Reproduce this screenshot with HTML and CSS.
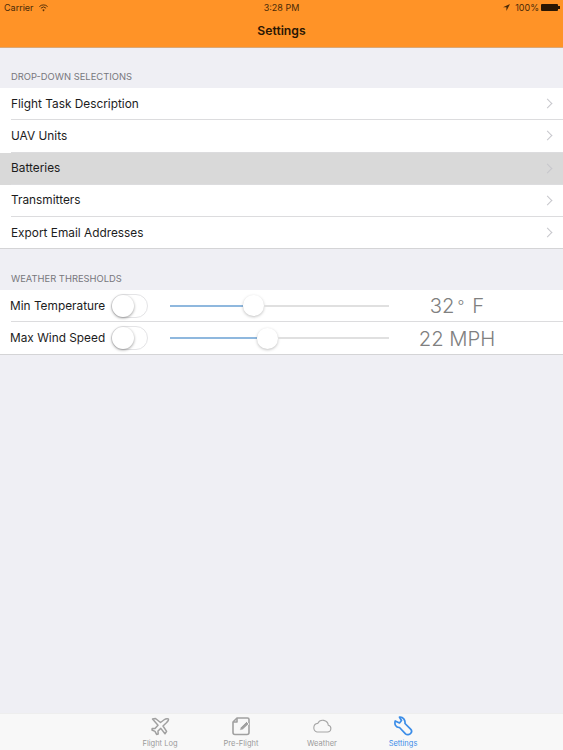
FILE: index.html
```html
<!DOCTYPE html>
<html lang="en">
<head>
  <meta charset="UTF-8">
  <title>Settings</title>
  <link rel="stylesheet" href="styles.css">
</head>
<body>
  <div class="screen">
    <header class="topbar">
      <div class="status">
        <div class="status-left">
          <span>Carrier</span>
          <svg width="9" height="8" viewBox="0 0 9 8" fill="none" stroke="#5a3208" stroke-width="1"><path d="M.4 2.6a5.8 5.8 0 0 1 8.2 0"/><path d="M1.9 4.2a3.7 3.7 0 0 1 5.2 0"/><path d="M4.5 7.4 3.3 5.9a1.7 1.7 0 0 1 2.4 0Z" fill="#5a3208" stroke="none"/></svg>
        </div>
        <div class="status-time">3:28 PM</div>
        <div class="status-right">
          <svg class="arrow" width="7" height="7" viewBox="0 0 7 7"><path d="M7 0 0 3.2h3.4V7Z" fill="#4a2a08"/></svg>
          <span>100%</span>
          <span class="battery"></span>
        </div>
      </div>
      <h1 class="title">Settings</h1>
    </header>

    <main class="content">
      <h2 class="section-label first">DROP-DOWN SELECTIONS</h2>
      <ul class="list">
        <li class="row"><div class="row-body">Flight Task Description<span class="chevron"></span></div></li>
        <li class="row"><div class="row-body">UAV Units<span class="chevron"></span></div></li>
        <li class="row selected"><div class="row-body">Batteries<span class="chevron"></span></div></li>
        <li class="row"><div class="row-body">Transmitters<span class="chevron"></span></div></li>
        <li class="row"><div class="row-body">Export Email Addresses<span class="chevron"></span></div></li>
      </ul>

      <h2 class="section-label">WEATHER THRESHOLDS</h2>
      <div class="list">
        <div class="threshold">
          <span class="threshold-name">Min Temperature</span>
          <span class="switch"></span>
          <div class="slider"><span class="slider-fill fill-temp"></span><span class="slider-thumb"></span><span class="slider-rest"></span></div>
          <div class="reading">32<span class="degree">°</span>F</div>
        </div>
        <div class="threshold">
          <span class="threshold-name">Max Wind Speed</span>
          <span class="switch"></span>
          <div class="slider"><span class="slider-fill fill-wind"></span><span class="slider-thumb"></span><span class="slider-rest"></span></div>
          <div class="reading">22 MPH</div>
        </div>
      </div>
    </main>

    <nav class="tabs">
      <div class="tab">
        <svg width="20" height="20" viewBox="0 0 20 20" fill="none" stroke="#a0a0a0" stroke-width="1.5" stroke-linejoin="round"><path d="M2.5 3 5.500 2.500 10.500 6.500 14.500 3.500C16 2.500 18 2.400 18.400 3 18.800 3.800 17.600 5.600 16.400 6.800L13 10 16.600 15.400 15 17.800 10.800 12.400 8 15 8.200 18 6.600 18.400 5 15.400 2 14 2.200 12.400 5 12.400 8 9.200Z"/></svg>
        <span>Flight Log</span>
      </div>
      <div class="tab">
        <svg width="20" height="20" viewBox="0 0 20 20" fill="none" stroke="#a0a0a0" stroke-width="1.6" stroke-linejoin="round"><path d="M6 2H16.500A1.500 1.500 0 0 1 18 3.500V16.500A2 2 0 0 1 16 18.500H4A2 2 0 0 1 2 16.500V6Z"/><path d="M6 2V6H2"/><path d="M8.500 14.500 9.300 11.500 15.500 5.500 18 8 11.800 13.800Z" fill="#a0a0a0" stroke="#fff" stroke-width=".8"/></svg>
        <span>Pre-Flight</span>
      </div>
      <div class="tab">
        <svg width="20" height="20" viewBox="0 0 20 20" fill="none" stroke="#a6a6a6" stroke-width="1.1"><path d="M5 16H15.500A3.400 3.400 0 0 0 16.300 9.300 5.600 5.600 0 0 0 5.700 7.400 4.400 4.400 0 0 0 5 16Z"/></svg>
        <span>Weather</span>
      </div>
      <div class="tab active">
        <svg width="20" height="20" viewBox="0 0 20 20" fill="none" stroke="#3b8de8" stroke-width="1.700" stroke-linejoin="round"><path d="M6.500 1.200 8.500 4.500 6.500 7 2.200 5C1.200 8.500 3 11.800 6.500 11.500L12.500 17.800C14 19.200 16.500 18.800 17.600 17.500 18.800 16.200 18.800 14.400 17.600 13.200L12 7.500C12.500 4 10 .8 6.500 1.200Z"/></svg>
        <span>Settings</span>
      </div>
    </nav>
  </div>
</body>
</html>
```

FILE: styles.css
```css
* {
  box-sizing: border-box;
  margin: 0;
  padding: 0;
}

body {
  font-family: "Inter", "Liberation Sans", sans-serif;
  background-color: #efeff4;
  color: #1c1c1c;
}

.screen {
  display: flex;
  flex-direction: column;
  height: 750px;
  overflow: hidden;
}

.topbar {
  height: 48px;
  background-color: #ff9327;
  border-bottom: 1px solid #d9a878;
}

.status {
  display: grid;
  grid-template-columns: 1fr auto 1fr;
  align-items: center;
  height: 15px;
  padding: 0 4px;
  font-size: 9px;
  color: #4a2a08;
}

.status-left {
  display: flex;
  align-items: center;
  gap: 5px;
}

.status-right {
  display: flex;
  align-items: center;
  justify-content: flex-end;
  gap: 2px;
}

.arrow {
  margin-right: 3px;
}

.battery {
  position: relative;
  width: 17px;
  height: 7px;
  margin-right: 1px;
  background-color: #2a1704;
  border-radius: 1px;
}

.battery::after {
  content: "";
  position: absolute;
  top: 2px;
  right: -1.5px;
  width: 1.5px;
  height: 3px;
  background-color: #2a1704;
}

.title {
  margin-top: 1px;
  height: 30px;
  line-height: 30px;
  font-size: 12.2px;
  font-weight: 600;
  text-align: center;
  color: #2a1704;
}

.content {
  flex: 1;
}

.section-label {
  height: 40.75px;
  padding: 24px 0 0 11px;
  font-size: 9.4px;
  line-height: 11px;
  font-weight: 400;
  color: #77777c;
}

.section-label.first {
  height: 40px;
  padding-top: 23px;
}

.list {
  list-style: none;
  background-color: #fff;
  border-bottom: 1px solid #d4d4d6;
}

.row {
  height: 32.25px;
  padding-left: 11px;
  font-size: 11.85px;
}

.row:last-child {
  height: 31.25px;
}

.row-body {
  display: flex;
  align-items: center;
  justify-content: space-between;
  height: 100%;
  padding-right: 12px;
  border-bottom: 1px solid #dcdcde;
}

.row:last-child .row-body {
  border-bottom: none;
}

.row.selected {
  background-color: #d9d9d9;
}

.chevron {
  width: 7px;
  height: 7px;
  border-top: 1.3px solid #c7c7cc;
  border-right: 1.3px solid #c7c7cc;
  transform: rotate(45deg);
}

.threshold {
  display: flex;
  align-items: center;
  height: 32px;
  margin-left: 11px;
  font-size: 11.85px;
  border-bottom: 1px solid #dcdcde;
}

.threshold:last-child {
  border-bottom: none;
}

.threshold-name {
  width: 101px;
  margin-left: -1px;
  white-space: nowrap;
}

.switch {
  position: relative;
  width: 37px;
  height: 24px;
  border: 1px solid #e4e4e6;
  border-radius: 12px;
  background-color: #fff;
}

.switch::before {
  content: "";
  position: absolute;
  top: 0;
  left: 0;
  width: 22px;
  height: 22px;
  border-radius: 50%;
  background-color: #fff;
  box-shadow: 0 1px 3px rgba(0, 0, 0, 0.4);
}

.slider {
  display: flex;
  align-items: center;
  width: 219px;
  margin-left: 22px;
}

.slider-fill {
  height: 2px;
  background-color: #8fb8de;
}

.fill-temp {
  width: 73px;
}

.fill-wind {
  width: 87px;
}

.slider-rest {
  flex: 1;
  height: 2px;
  background-color: #e0e0e0;
}

.slider-thumb {
  width: 21px;
  height: 21px;
  border-radius: 50%;
  background-color: #fff;
  box-shadow: 0 1px 3px rgba(0, 0, 0, 0.25);
}

.reading {
  flex: 1;
  padding-right: 38px;
  text-align: center;
  font-size: 20.3px;
  font-weight: 300;
  color: #808080;
}

.degree {
  margin: 0 8px 0 3px;
  font-size: 15px;
  vertical-align: 2px;
}

.tabs {
  display: flex;
  justify-content: center;
  height: 37px;
  background-color: #f8f8f8;
  border-top: 1px solid #eee;
}

.tab {
  display: flex;
  flex-direction: column;
  align-items: center;
  gap: 2px;
  width: 81px;
  padding-top: 2px;
  font-size: 7.5px;
  line-height: 11px;
  color: #9a9a9a;
}

.tab.active {
  color: #3b8de8;
}
```
